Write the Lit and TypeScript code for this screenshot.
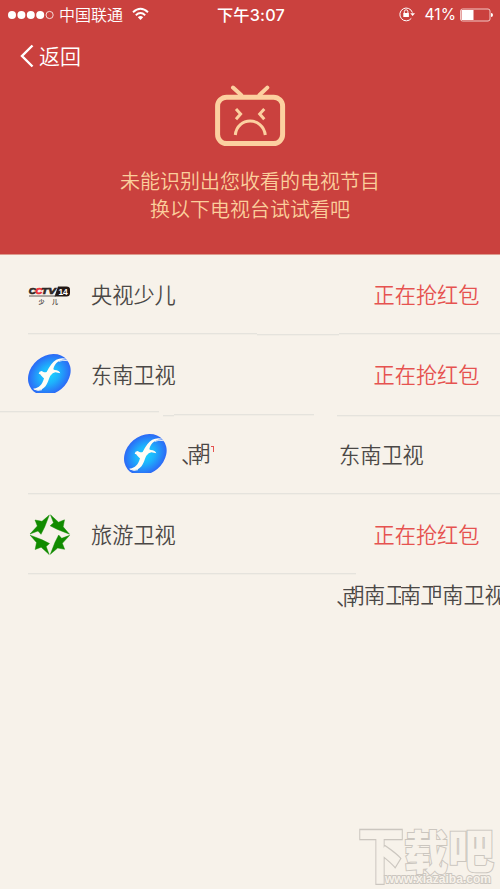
import { LitElement, html, css, svg } from "lit";
import { customElement, property } from "lit/decorators.js";
import { styleMap } from "lit/directives/style-map.js";

@customElement("station-logo")
class StationLogo extends LitElement {
  @property() name = "";
  static styles = css`
    :host { display: block; width: 43px; height: 41px; }
    svg { display: block; width: 43px; height: 41px; overflow: visible; }
    text { font-family: "Liberation Sans", "Noto Sans CJK SC", sans-serif; }
  `;
  cctv() {
    return svg`<svg viewBox="0 0 43 41">
      <path d="M30 12.5H38.5Q42 12.5 42 15.5V19Q42 22.5 38.5 22.5H26.5Z" fill="#231815"/>
      <g font-weight="900" font-style="italic" font-size="9.6" stroke-width=".7">
        <text x=".8" y="20.4" fill="#302824" stroke="#302824" textLength="7.2" lengthAdjust="spacingAndGlyphs">C</text>
        <text x="7.2" y="20.4" fill="#ec3038" stroke="#ec3038" textLength="7.2" lengthAdjust="spacingAndGlyphs">C</text>
        <text x="13.3" y="20.4" fill="#302824" stroke="#302824" textLength="14.4" lengthAdjust="spacingAndGlyphs">TV</text>
      </g>
      <text x="30.4" y="20.9" font-size="9.6" font-weight="700" fill="#fff" textLength="9.4" lengthAdjust="spacingAndGlyphs">14</text>
      <path d="M1 22H28" stroke="#514b47" stroke-width=".9"/>
      <g font-size="6" font-weight="700" fill="#514b47"><text x="10.5" y="29.6">少</text><text x="24" y="29.6">儿</text></g>
    </svg>`;
  }
  dongnan() {
    return svg`<svg viewBox="0 0 129 123">
      <defs>
        <radialGradient id="g"><stop offset="0" stop-color="#18d5ff"/><stop offset=".45" stop-color="#1eb2fc"/><stop offset="1" stop-color="#2c69f6"/></radialGradient>
        <clipPath id="c"><rect width="129" height="117"/></clipPath>
      </defs>
      <g clip-path="url(#c)">
        <ellipse cx="64" cy="62" rx="69" ry="56" transform="rotate(-40 64 62)" fill="url(#g)"/>
        <path d="M117 16C101 9 81 15 70 31Q62 42 56 54C50 56 46 54 41 51Q33 52 32 59Q37 59 40 65Q46 71 48 73C43 92 33 102 18 104L13 102Q28 113 44 104C58 96 61 77 67 65Q74 56 82 55Q90 56 97 58Q94 49 80 48Q76 47 76 45C81 26 95 16 117 16Z" fill="#fffdf5"/>
        <path d="M17 105Q30 112 42 107" stroke="#fffdf5" stroke-width="3" fill="none"/>
        <path d="M93 22Q103 17 119 20" stroke="#fffdf5" stroke-width="2.5" fill="none"/>
      </g>
    </svg>`;
  }
  travel() {
    return svg`<svg viewBox="0 0 129 123">
      ${[0, 90, 180, 270].map(a => svg`<path transform="rotate(${a} 65.5 62)" fill="#118b00" stroke="#118b00" stroke-width="1.4" d="M64 3L42 22L21 18L28 36L6 60L30 51L39 61L50 39Z"/>`)}
    </svg>`;
  }
  render() {
    return this.name === "cctv" ? this.cctv() : this.name === "travel" ? this.travel() : this.dongnan();
  }
}

interface Piece { t: string; w: number; shift?: number; dy?: number; cut?: number; }

@customElement("glyph-strip")
class GlyphStrip extends LitElement {
  @property({ attribute: false }) pieces: Piece[] = [];
  static styles = css`
    :host { display: flex; height: 32px; }
    .piece { flex: none; overflow: hidden; height: 32px; line-height: 32px; white-space: nowrap; }
    .piece span { display: block; }
  `;
  render() {
    return html`${this.pieces.map(p => html`<div class="piece"
      style=${styleMap({ width: p.w + "px", marginTop: (p.dy ?? 0) + "px", height: (p.cut ?? 32) + "px" })}><span
      style=${styleMap({ marginLeft: -(p.shift ?? 0) + "px" })}>${p.t}</span></div>`)}<slot></slot>`;
  }
}

@customElement("app-root")
class AppRoot extends LitElement {
  static styles = css`
    :host {
      display: flex; flex-direction: column; position: relative; width: 500px; height: 889px; overflow: hidden;
      background: #f7f2ea; color: #4b4846; font: 350 21.2px/32px "Noto Sans CJK SC", sans-serif;
    }
    header { flex: none; background: #ca413e; color: #fff; border-bottom: 1px solid #dd9b8e; box-sizing: border-box; height: 255px; margin-bottom: -1px; }
    .status { height: 28px; display: grid; grid-template-columns: 1fr auto 1fr; align-items: center; font-size: 16px; line-height: 28px; }
    .left, .right { display: flex; align-items: center; }
    .left { padding-left: 8px; }
    .carrier { margin-top: -1px; }
    .dots { width: 46px; height: 12px; margin-right: 5px; }
    .wifi { width: 17px; height: 14px; margin-left: 9px; margin-top: -1px; }
    .time { font: 500 16.2px/28px Inter, "Noto Sans CJK SC", sans-serif; letter-spacing: .2px; padding-left: 2px; }
    .right { justify-content: flex-end; padding-right: 7px; font: 400 15.6px/28px Inter, sans-serif; }
    .lock { width: 16px; height: 16px; margin-right: 10px; margin-top: -1px; }
    .pct { margin-top: 1px; }
    .battery { width: 33px; height: 14px; margin-left: 4px; }
    .back { display: flex; align-items: center; height: 56px; padding-left: 20px; font-size: 21px; }
    .back span { margin-top: -2px; }
    .back svg { width: 14px; height: 24px; margin-right: 5px; }
    .tv { display: block; width: 72px; height: 64px; margin: 0 auto 0 214px; }
    .message { margin-top: 19px; text-align: center; font-size: 20px; line-height: 28px; color: #fbcf9c; }
    .row { display: flex; align-items: center; height: 80px; box-sizing: border-box; padding: 0 20px 0 28px; }
    .name { margin-left: 20px; flex: 1; }
    .state { color: #e65350; margin-right: .5px; }
    .rule { display: flex; height: 0; }
    .rule i { flex: none; height: 1px; background: #e5e3dd; border-bottom: 1px solid #f1ede5; }
    .shifted { padding-left: 124px; }
    .shifted glyph-strip { margin-left: 15px; width: 157px; }
    .corner { width: 2px; height: 5px; margin: 8px 0 0 1px; border-top: 1.5px solid #e65350; border-right: 1.5px solid #e65350; }
    .tail { margin-left: 337px; margin-top: 4px; width: 163px; overflow: hidden; }
    .mark { position: absolute; left: 354px; top: 820px; width: 146px; height: 69px; }
    .mark text { font-family: "Noto Sans CJK SC", sans-serif; font-weight: 900; fill: #f7f2ea; stroke: #cbc6bf; paint-order: stroke; }
    .mark .url { font: 700 12.5px "Liberation Sans", sans-serif; }
  `;
  rule(parts: number[][]) {
    return html`<div class="rule">${parts.map(([gap, width, dy]) => html`<i style=${styleMap({ marginLeft: gap + "px", width: width + "px", marginTop: dy + "px" })}></i>`)}</div>`;
  }
  row(logo: string, name: string) {
    return html`<div class="row"><station-logo name=${logo}></station-logo><span class="name">${name}</span><span class="state">正在抢红包</span></div>`;
  }
  render() {
    return html`
      <header>
        <div class="status">
          <div class="left">
            <svg class="dots" viewBox="0 0 46 12">${[4, 13.4, 22.8, 32.2].map(x => svg`<circle cx=${x} cy="6" r="4" fill="#fff"/>`)}<circle cx="41.6" cy="6" r="3.6" fill="none" stroke="#fff" stroke-width=".8"/></svg>
            <span class="carrier">中国联通</span>
            <svg class="wifi" viewBox="0 0 17 14" fill="none" stroke="#fff" stroke-width="1.9"><path d="M1 5.2Q8.5 -1.7 16 5.2M3.8 8.2Q8.5 4 13.2 8.2"/><path d="M5.8 10.2Q8.5 8 11.2 10.2L8.5 13Z" fill="#fff" stroke="none"/></svg>
          </div>
          <div class="time">下午3:07</div>
          <div class="right">
            <svg class="lock" viewBox="0 0 16 16" fill="none" stroke="#fff"><path d="M12.3 12.4A6.4 6.4 0 1 1 13.4 6.6" /><path d="M11.2 7.2H16L13.6 10Z" fill="#fff" stroke="none"/><rect x="4.3" y="7" width="5.6" height="4" fill="#fff" stroke="none"/><path d="M5.3 7V5.6a1.8 1.8 0 0 1 3.6 0V7"/></svg>
            <span class="pct">41%</span>
            <svg class="battery" viewBox="0 0 33 14"><rect x=".5" y="1" width="29.5" height="12" rx="2" fill="none" stroke="#f2c8c4"/><rect x="1.5" y="2" width="12" height="10" fill="#fff"/><path d="M31 5Q33 5 33 7T31 9Z" fill="#fff"/></svg>
          </div>
        </div>
        <div class="back"><svg viewBox="0 0 14 24" fill="none" stroke="#fff" stroke-width="2.4"><path d="M12.5 1.5L2 12L12.5 22.5"/></svg><span>返回</span></div>
        <svg class="tv" viewBox="0 0 72 64" fill="none" stroke="#fcd0a0" stroke-linecap="round">
          <rect x="3.6" y="13.2" width="65" height="46.4" rx="9" stroke-width="5"/>
          <path d="M19 3.6L27.2 11M53.3 3.6L45.5 11" stroke-width="4"/>
          <path d="M22 25L26.6 30L22 35.2M50.3 25L45.7 30L50.3 35.2" stroke-width="3" stroke-linecap="butt"/>
          <path d="M21.3 51C23 32.4 49 32.4 51.3 51" stroke-width="3" stroke-linecap="butt"/>
        </svg>
        <div class="message">未能识别出您收看的电视节目<br>换以下电视台试试看吧</div>
      </header>
      ${this.row("cctv", "央视少儿")}
      ${this.rule([[28, 229, -1], [0, 82, 0], [0, 161, -1]])}
      ${this.row("dongnan", "东南卫视")}
      ${this.rule([[0, 159, -3], [4, 11, 1], [0, 140, 0], [23, 163, 1]])}
      <div class="row shifted"><station-logo name="dongnan"></station-logo>
        <glyph-strip .pieces=${[
          { t: "、", w: 6, shift: 1 }, { t: "南", w: 13, shift: 1 },
          { t: "朝", w: 9, shift: 11.5, dy: -2 },
        ]}><div class="corner"></div></glyph-strip><span>东南卫视</span></div>
      ${this.rule([[28, 472, -1]])}
      ${this.row("travel", "旅游卫视")}
      ${this.rule([[28, 328, -1]])}
      <glyph-strip class="tail" .pieces=${[
        { t: "、", w: 6, shift: 1, dy: 2 }, { t: "南", w: 12, shift: 1, dy: 2 }, { t: "朝", w: 9, shift: 11.5 },
        { t: "南", w: 21.2 }, { t: "卫", w: 15.5 }, { t: "南", w: 19.5, shift: 1 }, { t: "卫", w: 13 },
        { t: "朝", w: 9, shift: 12, cut: 20 }, { t: "南卫视", w: 62 },
      ]}></glyph-strip>
      <svg class="mark" viewBox="0 0 146 69">
        <g font-size="46" stroke-width="2">
          <text transform="translate(4 58) scale(1 1.31)">下</text>
          <text transform="translate(50 49) scale(.96 1)">载</text>
          <text transform="translate(94 48) scale(1 1.02)">吧</text>
        </g>
        <text class="url" x="31" y="62.5" stroke-width="1.8" textLength="106" lengthAdjust="spacingAndGlyphs">www.xiazaiba.com</text>
      </svg>
    `;
  }
}
